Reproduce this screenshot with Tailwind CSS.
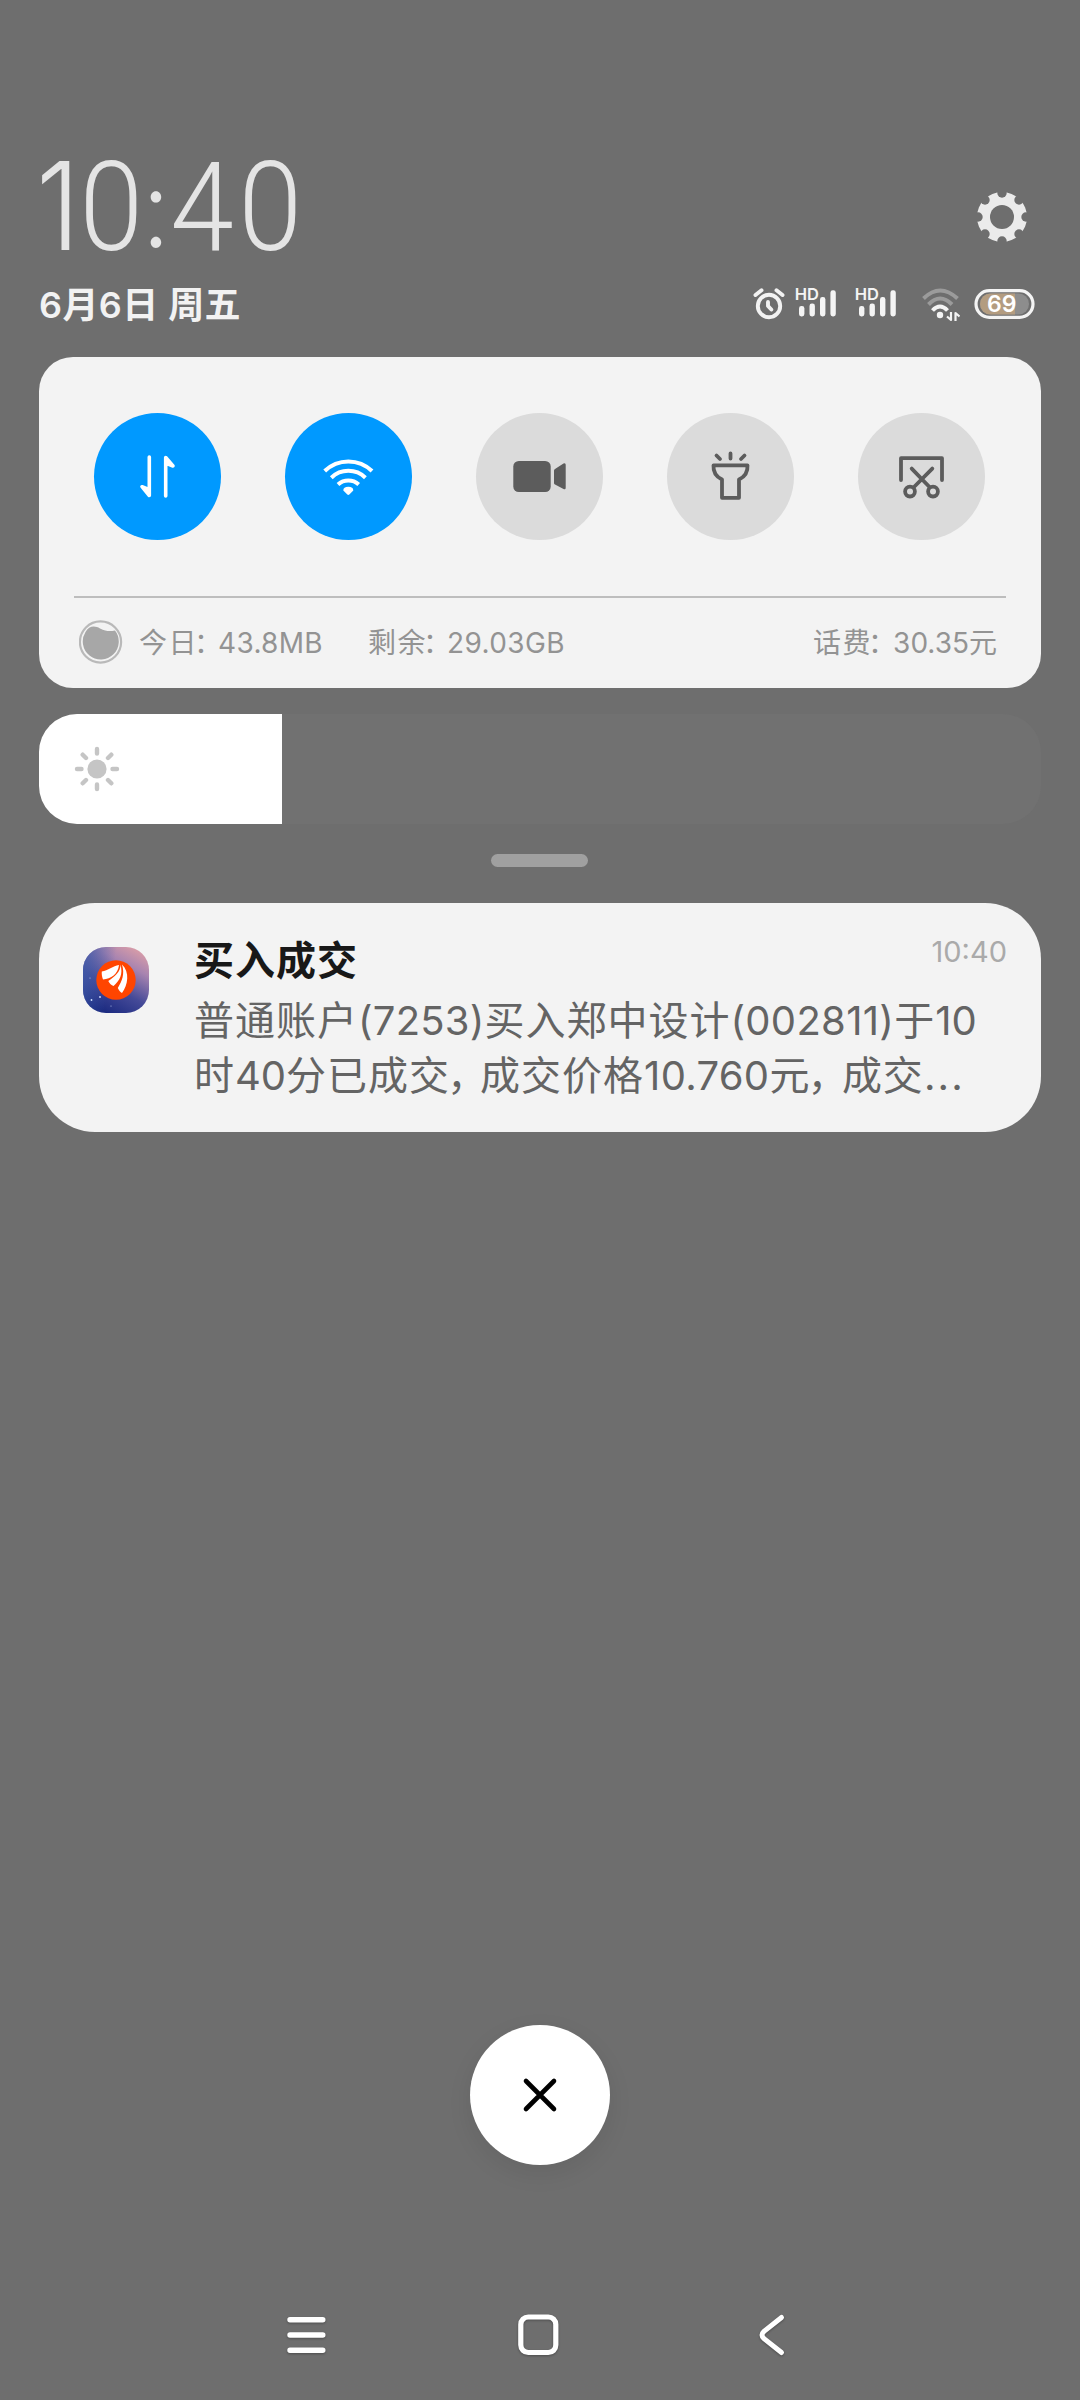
<!DOCTYPE html>
<html lang="zh-CN">
<head>
<meta charset="utf-8">
<title>通知中心</title>
<script src="https://cdn.jsdelivr.net/npm/@tailwindcss/browser@4"></script>
</head>
<body class="bg-[#6e6e6e]">
<div class="flex h-[2400px] w-[1080px] flex-col overflow-hidden px-[39px] pt-[140px] font-['Inter','Noto_Sans_CJK_SC',sans-serif]">

  <!-- Clock and settings -->
  <div class="flex h-[120px] items-start justify-between">
    <svg class="ml-px h-[120px] w-[270px] overflow-visible" viewBox="0 0 270 120" fill="#e4e4e4">
      <text transform="scale(.915 1)" x="-4.500 43.3 111.5 142.4 217" y="110 110 107 110 110" class="font-['Roboto'] text-[125px] font-light"><tspan class="font-['Inter'] text-[122px]">1</tspan>0<tspan class="font-['Inter'] text-[108px]">:</tspan>40</text>
    </svg>
    <svg class="mt-[51px] mr-[13px] h-[52px] w-[52px]" viewBox="-26 -26 52 52">
      <mask id="gear">
        <circle r="25" fill="#fff"/>
        <circle r="12" fill="#000"/>
        <g fill="#000">
          <circle cy="-24" r="4.700"/><circle cy="24" r="4.700"/><circle cx="-24" r="4.700"/><circle cx="24" r="4.700"/>
          <circle cx="17" cy="17" r="4.700"/><circle cx="-17" cy="17" r="4.700"/><circle cx="17" cy="-17" r="4.700"/><circle cx="-17" cy="-17" r="4.700"/>
        </g>
      </mask>
      <rect x="-26" y="-26" width="52" height="52" fill="#ebebeb" mask="url(#gear)"/>
    </svg>
  </div>

  <!-- Date and status icons -->
  <div class="mt-6 flex h-10 items-center justify-between pr-[6px]">
    <div class="pt-px text-[36px] leading-10 font-semibold tracking-[0.4px] whitespace-pre text-[#f2f2f2]">6月6日 周五</div>
    <div class="flex items-center">
      <svg class="h-8 w-8" viewBox="753 288 32 32" fill="none" stroke="#f2f2f2" stroke-width="3.900" stroke-linecap="round" stroke-linejoin="round">
        <circle cx="769" cy="306" r="11.2"/><path d="M755.500 295l6-4.700M782.500 295l-6-4.700M768 302v4l3.300 3.500"/>
      </svg>
      <svg class="ml-[11px] h-8 w-10 overflow-visible" viewBox="796 288 40 32" fill="#f4f4f4">
        <text x="794.800" y="299.500" class="text-[16.500px] font-semibold">HD</text>
        <rect x="799" y="306" width="5.400" height="10.500" rx="2.400"/><rect x="809.500" y="303.500" width="5.400" height="13" rx="2.400"/><rect x="820" y="297" width="5.400" height="19.500" rx="2.400"/><rect x="830.400" y="290.300" width="5.400" height="26.200" rx="2.400"/>
      </svg>
      <svg class="ml-5 h-8 w-10 overflow-visible" viewBox="796 288 40 32" fill="#f4f4f4">
        <text x="794.800" y="299.500" class="text-[16.500px] font-semibold">HD</text>
        <rect x="799" y="306" width="5.400" height="10.500" rx="2.400"/><rect x="809.500" y="303.500" width="5.400" height="13" rx="2.400"/><rect x="820" y="297" width="5.400" height="19.500" rx="2.400"/><rect x="830.400" y="290.300" width="5.400" height="26.200" rx="2.400"/>
      </svg>
      <svg class="ml-[26px] h-9 w-[38px]" viewBox="922 286 38 36" fill="none" stroke-width="4">
        <g stroke="#9b9b9b"><path d="M923.500 298.500Q940 282.500 957.500 298.500"/><path d="M928.500 304.500Q940 292.500 952 304.500"/></g>
        <path stroke="#f4f4f4" d="M932.500 310.500Q940 302.500 947.500 310.500"/>
        <circle cx="940" cy="315" r="3.200" fill="#f4f4f4"/>
        <path stroke="#f4f4f4" stroke-width="2.200" stroke-linejoin="round" d="M951 312v8l-4-3.500M955.500 321v-8l4 3.500"/>
      </svg>
      <svg class="ml-[14px] h-8 w-[61px]" viewBox="974 287 61 32">
        <defs><clipPath id="lvl"><rect x="980" y="292.500" width="49" height="21" rx="10.500"/></clipPath></defs>
        <rect x="976" y="289.700" width="57" height="26.600" rx="13.300" fill="none" stroke="#f4f4f4" stroke-width="3.200"/>
        <g clip-path="url(#lvl)"><rect x="980" y="292" width="49" height="22" fill="#8d8d8d"/><rect x="980" y="292" width="35" height="22" fill="#b39c80"/></g>
        <text x="1001.700" y="311.300" text-anchor="middle" fill="#fff" class="text-[23px] font-semibold">69</text>
      </svg>
    </div>
  </div>

  <!-- Quick settings -->
  <section class="mt-[33px] h-[331px] rounded-[34px] bg-[#f3f3f3] px-[35px] pt-14">
    <div class="flex justify-between pr-[21px] pl-5">
      <div class="size-[127px] rounded-full bg-[#0099ff]">
        <svg viewBox="0 0 127 127" fill="#fff" stroke="#fff" stroke-width="3.600" stroke-linecap="round" stroke-linejoin="round"><path d="M55.300 44v38.500l-7.300-8.800 7.300 3zM71.700 83V44.500l7.300 8.500-7.300-3z"/></svg>
      </div>
      <div class="size-[127px] rounded-full bg-[#0099ff]">
        <svg viewBox="0 0 127 127" fill="none" stroke="#fff" stroke-width="4"><path d="M39.700 58A34 34 0 0 1 87 58M46.300 64.700A24.500 24.500 0 0 1 80.400 64.700M53 71.500A15.500 15.500 0 0 1 73.700 71.500"/><path stroke="none" fill="#fff" d="M58.300 77.500Q58.300 73.800 63.300 73.800T68.300 77.500L64.300 81.600q-1 .8-2 0z"/></svg>
      </div>
      <div class="size-[127px] rounded-full bg-[#dbdbdb]">
        <svg viewBox="0 0 127 127" fill="#5c5c5c"><rect x="37.300" y="48" width="37.400" height="31" rx="5.500"/><path d="M79 56l8.500-5.500q2.200-.9 2.200 1.300v23q0 2.200-2.200 1.300L79 71.500q-1-.5-1-1.500V57.500q0-1 1-1.500z"/></svg>
      </div>
      <div class="size-[127px] rounded-full bg-[#dbdbdb]">
        <svg viewBox="0 0 127 127" fill="none" stroke="#5c5c5c" stroke-width="3.800" stroke-linecap="round" stroke-linejoin="round"><path d="M46.500 52.300H80.500C81 59.500 78 63.500 72 66.500V84.800H55V66.500C49 63.500 46 59.500 46.500 52.300zM63.500 40.500v5M49.500 42.500l3.500 3.500M77.500 42.500l-3.500 3.500"/></svg>
      </div>
      <div class="size-[127px] rounded-full bg-[#dbdbdb]">
        <svg viewBox="0 0 127 127" fill="none" stroke="#5c5c5c" stroke-width="3.800" stroke-linecap="round" stroke-linejoin="round"><path d="M43 67V45.200H84V67M53.700 55.600L71 73.500M74.300 55.600L56.500 73.500"/><circle cx="52" cy="78.600" r="4.900"/><circle cx="75" cy="78.600" r="4.900"/></svg>
      </div>
    </div>
    <div class="mt-14 h-[2px] bg-[#bdbdbd]"></div>
    <div class="mt-[22px] flex h-11 items-center pr-[9px] pl-[5px] text-[28px] leading-10 text-[#939393]">
      <svg class="mr-[16px] size-11" viewBox="0 0 44 44"><circle cx="21.500" cy="22" r="20.600" fill="none" stroke="#b9b9b9" stroke-width="2.200"/><path fill="#a7a7a7" d="M6.500 12C10 5.500 16 5.500 21 8.500C27 11.500 31 11.500 36 10.500A18 18 0 1 1 6.500 12z"/></svg>
      <div class="pt-[2px]"><span class="tracking-[1.500px]">今日</span><span class="ml-[-4px] tracking-[-4px]">：</span><span class="tracking-[0.3px]">43.8MB</span></div>
      <div class="ml-[45px] pt-[2px]"><span class="tracking-[1.500px]">剩余</span><span class="ml-[-4px] tracking-[-4px]">：</span><span class="tracking-[0.4px]">29.03GB</span></div>
      <div class="ml-auto pt-[2px]"><span class="tracking-[1.500px]">话费</span><span class="ml-[-4px] tracking-[-3px]">：</span><span>30.35</span><span>元</span></div>
    </div>
  </section>

  <!-- Brightness -->
  <div class="mt-[26px] flex h-[110px] overflow-hidden rounded-[38px] bg-[#717171]">
    <div class="flex w-[243px] items-center bg-white pl-[35px]">
      <svg class="size-[46px]" viewBox="-23 -23 46 46" stroke="#c5c5c5" stroke-width="4.400" stroke-linecap="round"><circle r="9.600" fill="#c5c5c5" stroke="none"/><path d="M0-15.500V-20M0 15.500V20M-15.500 0H-20M15.500 0H20M11-11l3.300-3.300M-11-11l-3.300-3.300M11 11l3.300 3.300M-11 11l-3.300 3.300"/></svg>
    </div>
  </div>
  <div class="mt-[30px] ml-[452px] h-[13px] w-[97px] rounded-full bg-[#a0a0a0]"></div>

  <!-- Notification -->
  <article class="mt-9 flex h-[229px] rounded-[56px] bg-[#f3f3f3] pt-8 pl-11">
    <svg class="mt-3 size-[66px] shrink-0" viewBox="0 0 66 66">
      <defs>
        <linearGradient id="sky" x1=".9" y1="0" x2=".35" y2="1"><stop offset="0" stop-color="#e3a2a6"/><stop offset=".3" stop-color="#a884b0"/><stop offset=".65" stop-color="#454a98"/><stop offset="1" stop-color="#1b2a80"/></linearGradient>
        <linearGradient id="dusk" x1="0" y1="0" x2="1" y2=".2"><stop offset="0" stop-color="#3f5cab" stop-opacity=".85"/><stop offset=".5" stop-color="#3f5cab" stop-opacity="0"/></linearGradient>
      </defs>
      <rect width="66" height="66" rx="23" fill="url(#sky)"/><rect width="66" height="66" rx="23" fill="url(#dusk)"/>
      <g fill="#cfe0ff"><circle cx="8.500" cy="53" r=".9"/><circle cx="17" cy="50" r=".9"/><circle cx="7" cy="31" r=".5"/><circle cx="28" cy="59" r=".5"/></g>
      <circle cx="33" cy="33" r="19.700" fill="#ff4500"/>
      <g fill="#fff"><path d="M36 18C30 19 25 23.500 18.800 24.500C18.500 27 19 30 20 32.500C28 32 35 27 36 18z"/><path d="M37.300 17.500C38 25 31 30 25.300 34C26.500 36.500 28.500 38.300 30.500 39C36.500 34 40.500 27 37.300 17.500z"/><path d="M39 17.500C42 27 39 34 34.800 41C36 43.500 37.500 45.200 39 46C45 38 47 25 39 17.500z"/></g>
    </svg>
    <div class="ml-[45px] w-[813px]">
      <div class="flex justify-between">
        <h2 class="pt-px text-[40px] leading-[50px] font-bold tracking-[1px] text-[#181818]">买入成交</h2>
        <time class="mt-[2px] h-[30px] text-[29px] leading-[30px] text-[#aaaaaa]">10:40</time>
      </div>
      <div class="mt-[7px] text-[40px] leading-[55px] tracking-[1px] whitespace-nowrap text-[#646464]">
        <p>普通账户<span class="tracking-[0.2px]">(7253)</span>买入郑中设计<span class="tracking-[0.3px]">(002811)</span>于<span class="tracking-normal">10</span></p>
        <p>时<span class="tracking-normal">40</span>分已成交<span class="ml-[-3px] tracking-[-7px]">，</span>成交价格<span class="tracking-[0.3px]">10.760</span>元<span class="ml-[-3px] tracking-[-5.500px]">，</span>成交<span class="tracking-[2.200px]">...</span></p>
      </div>
    </div>
  </article>

  <!-- Clear all -->
  <button class="mx-auto mt-[893px] flex size-[140px] shrink-0 items-center justify-center rounded-full bg-white shadow-[0_8px_24px_rgba(0,0,0,0.08)]">
    <svg class="size-10" viewBox="0 0 40 40" stroke="#000" stroke-width="4.600" stroke-linecap="round"><path d="M6 6l28 28M34 6L6 34"/></svg>
  </button>

  <!-- Navigation -->
  <nav class="mt-[146px] flex justify-between pr-[248px] pl-[243px] drop-shadow-[0_1px_1px_rgba(0,0,0,0.3)]">
    <svg class="h-12 w-12" viewBox="282 2311 48 48" stroke="#fff" stroke-width="5.400" stroke-linecap="round"><path d="M290 2319.700h32.800M290 2335h32.800M290 2350.300h32.800"/></svg>
    <svg class="h-12 w-12" viewBox="514.500 2311 48 48" fill="none" stroke="#fff" stroke-width="5.200"><rect x="521.300" y="2317" width="35" height="35.500" rx="7.500"/></svg>
    <svg class="h-12 w-12" viewBox="746 2311 48 48" fill="none" stroke="#fff" stroke-width="5" stroke-linecap="round"><path d="M782.500 2317.500L765 2331.300q-4 3.700 0 7.400L782.500 2352.500"/></svg>
  </nav>
</div>
</body>
</html>
